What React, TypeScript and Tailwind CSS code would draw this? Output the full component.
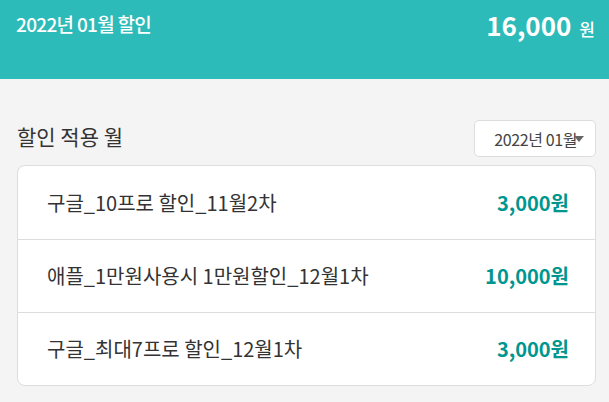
const font = "font-['Noto_Sans_CJK_KR','Noto_Sans',sans-serif]"

const items = [
  { name: '구글_10프로 할인_11월2차', amount: '3,000원' },
  { name: '애플_1만원사용시 1만원할인_12월1차', amount: '10,000원' },
  { name: '구글_최대7프로 할인_12월1차', amount: '3,000원' },
]

export default function App() {
  return (
    <div className={`${font} w-[609px] h-[402px] bg-[#f4f4f4] overflow-hidden`}>
      {/* Header */}
      <div className="h-[79px] bg-[#2cbbb8] flex items-start justify-between pl-[16px] pr-[14px] pt-[9px] text-white">
        <span className="text-[19px] font-medium tracking-[-0.7px] leading-[30px]">2022년 01월 할인</span>
        <span className="flex items-baseline gap-[8px] -mt-[1px]">
          <span className="text-[26px] font-bold leading-[34px]">16,000</span>
          <span className="text-[17px] font-medium">원</span>
        </span>
      </div>

      {/* Month select */}
      <div className="flex items-start justify-between pl-[17px] pr-[13px] mt-[41px]">
        <span className="text-[21px] text-[#333] leading-[30px] pt-[1px]">할인 적용 월</span>
        <div className="w-[122px] h-[37px] bg-white border border-[#ddd] rounded-[5px] flex items-center justify-end pr-[11px] text-[16px] text-[#444] tracking-[-0.4px]">
          <span>2022년 01월</span>
          <span className="w-0 h-0 border-l-[5px] border-r-[5px] border-t-[6px] border-l-transparent border-r-transparent border-t-[#666] -ml-[3px] mt-[1px]" />
        </div>
      </div>

      {/* List */}
      <div className="mx-[17px] mr-[13px] mt-[8px] bg-white border border-[#ddd] rounded-[8px]">
        {items.map((it, i) => (
          <div
            key={i}
            className={`h-[73px] flex items-center justify-between pl-[29px] pr-[26px] ${i > 0 ? 'border-t border-[#ddd]' : ''}`}
          >
            <span className="text-[20px] text-[#333]">{it.name}</span>
            <span className="text-[20px] font-bold text-[#009690]">{it.amount}</span>
          </div>
        ))}
      </div>
    </div>
  )
}
